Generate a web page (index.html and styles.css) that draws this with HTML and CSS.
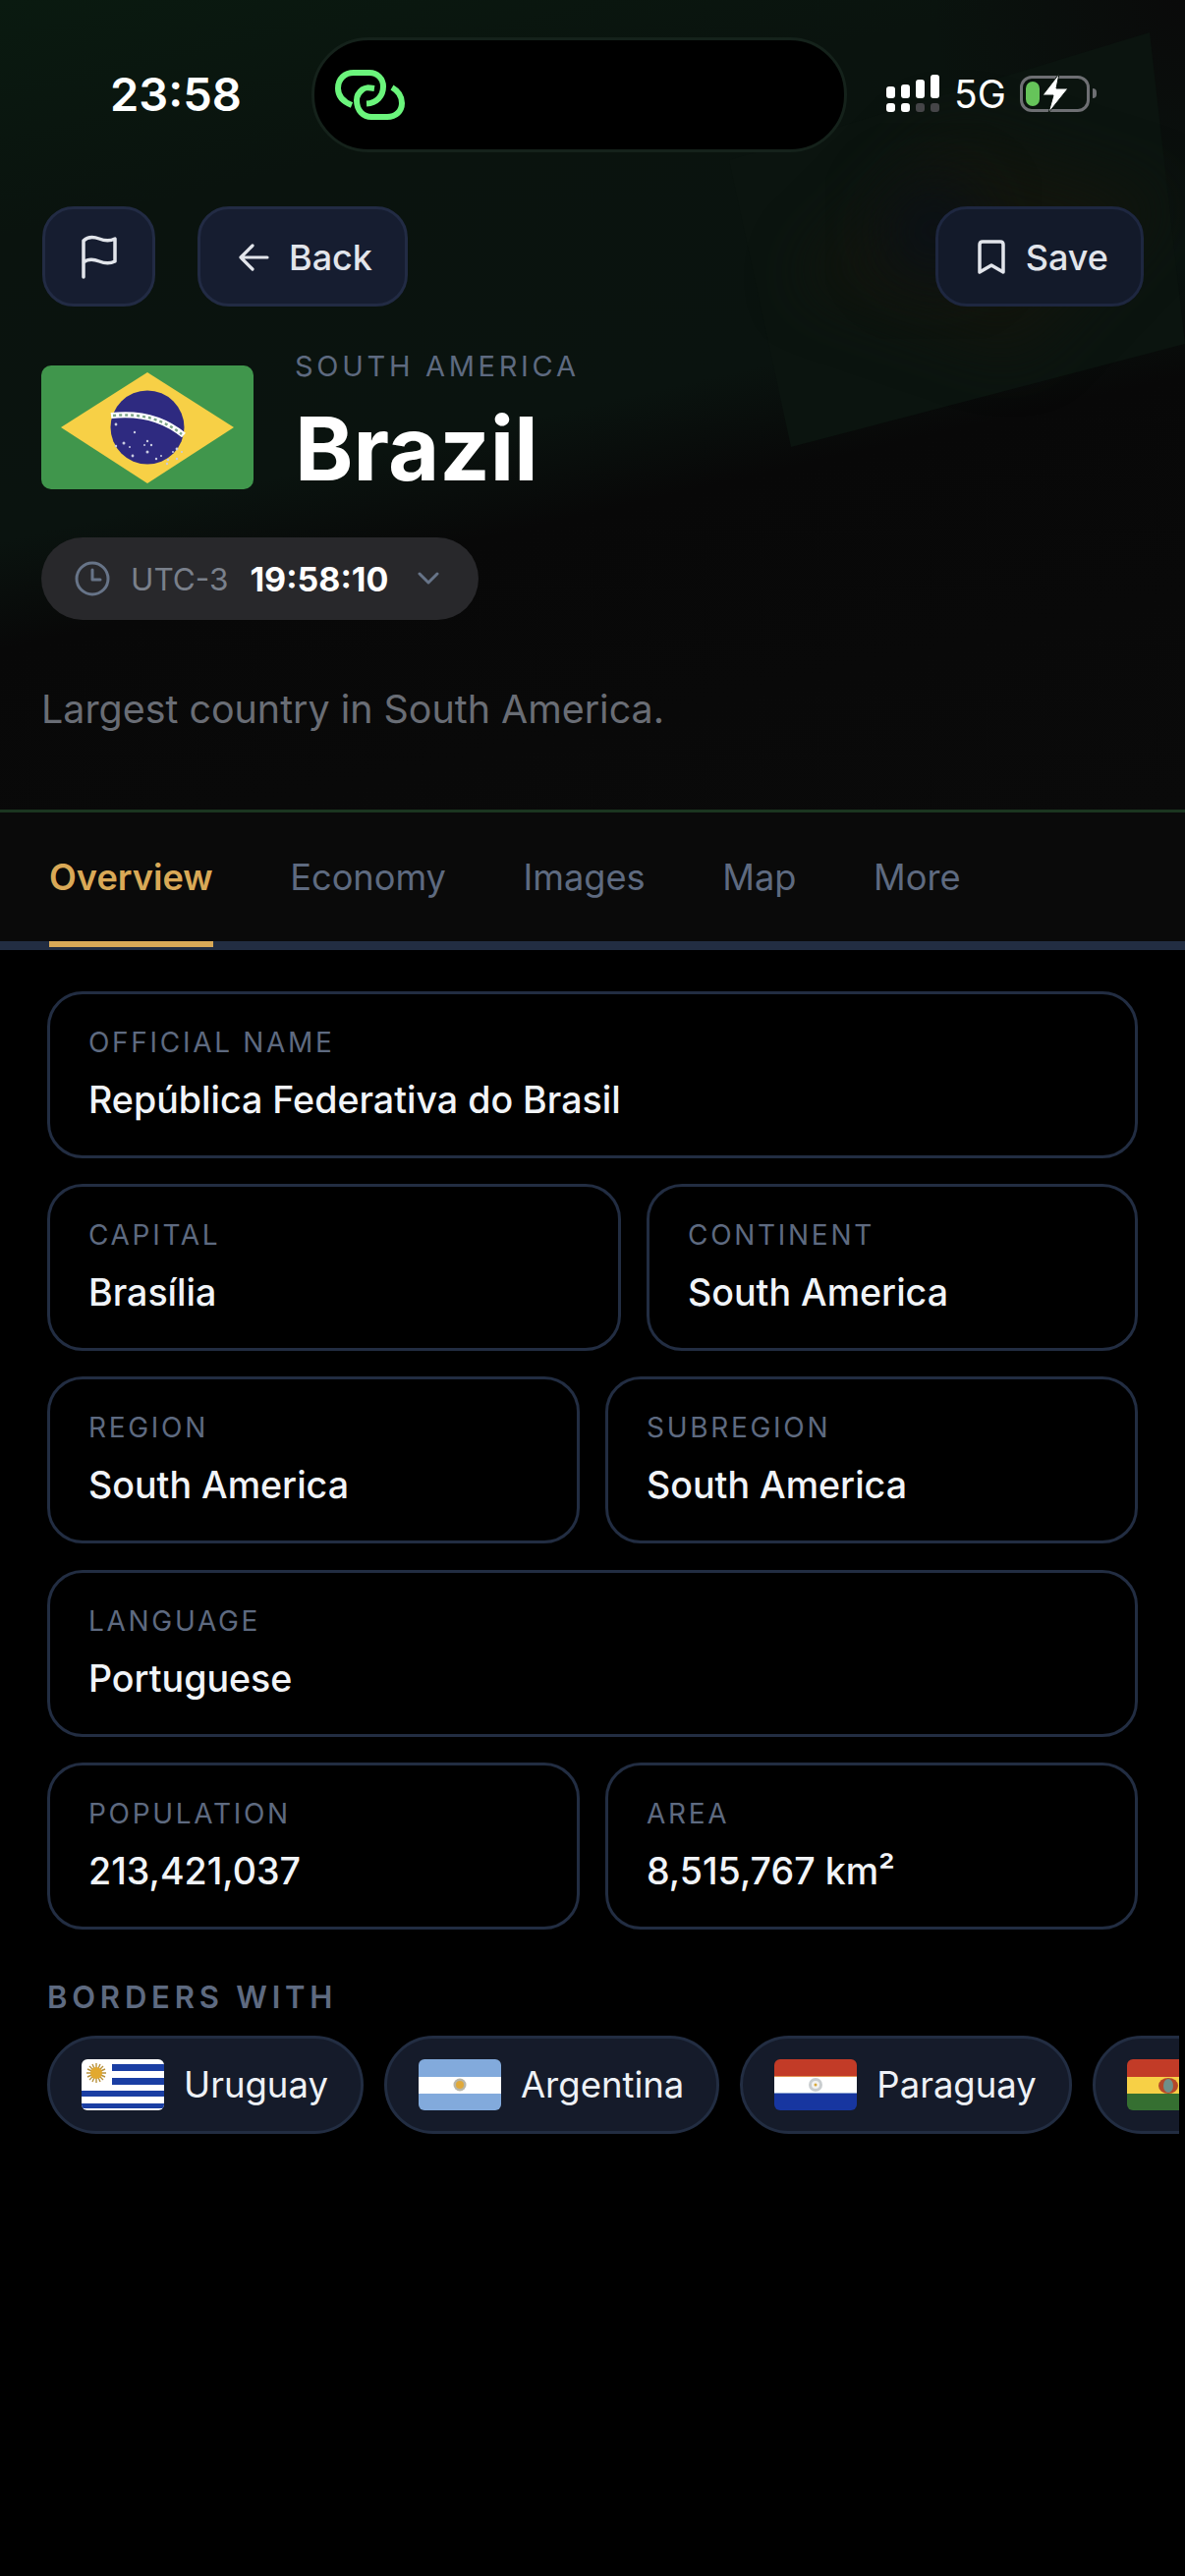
FILE: index.html
```html
<!DOCTYPE html>
<html lang="en">
<head>
  <meta charset="UTF-8">
  <meta name="viewport" content="width=device-width, initial-scale=1.0">
  <title>Brazil</title>
  <link rel="stylesheet" href="styles.css">
</head>
<body>
  <header class="hero">
    <!-- faint tilted flag behind the header -->
    <svg class="hero-bg" width="1206" height="824" viewBox="0 0 1206 824">
      <defs>
        <filter id="soft" x="-60%" y="-60%" width="220%" height="220%" color-interpolation-filters="sRGB"><feGaussianBlur stdDeviation="30"/></filter>
      </defs>
      <polygon points="742,163 1170,33 1206,350 805,455" fill="#0b140f"/>
      <polygon points="815,285 965,135 1185,205 1035,360" fill="#12150d" filter="url(#soft)"/>
      <circle cx="950" cy="235" r="50" fill="#0a1016" filter="url(#soft)"/>
    </svg>

    <div class="status-bar">
      <span class="status-time">23:58</span>
      <div class="island">
        <svg width="72" height="55" viewBox="15 8 72 55" fill="none" stroke="#6bf57c" stroke-width="6" stroke-linecap="butt">
          <path d="M32 46 C22 42 18 36 18 29 C18 19 25 13 34 13 L50 13 C58 13 64 19 64 27 C64 37 57 44 47 44.5"/>
          <path d="M55 29 C48 28 46 28 43 30 C39 33 37 37 37 41 C37 52 44 58 52 58 L68 58 C77 58 83 52 83 44 C83 37 80 32 73 28"/>
        </svg>
      </div>
      <div class="status-icons">
        <div class="signal">
          <span class="bar bar-1"></span><span class="bar bar-2"></span><span class="bar bar-3"></span><span class="bar bar-4"></span>
          <span class="dot"></span><span class="dot"></span><span class="dot dim"></span><span class="dot dim"></span>
        </div>
        <span class="network">5G</span>
        <div class="battery">
          <span class="battery-fill"></span>
          <svg class="battery-bolt" width="28" height="40" viewBox="0 0 28 40">
            <path d="M18 0 L1 22 L12 22 L7 40 L27 15 L15 15 Z" fill="#fff" stroke="#0a130e" stroke-width="1"/>
          </svg>
        </div>
        <span class="battery-tip"></span>
      </div>
    </div>

    <div class="actions">
      <button type="button" class="btn btn-flag">
        <svg width="38" height="46" viewBox="0 0 38 46" fill="none" stroke="#e2e5eb" stroke-width="3.5" stroke-linecap="round" stroke-linejoin="round">
          <path d="M3 44 V7 C8 2 14 3 19 5 C24 7 29 8 35 5 V28 C29 31 24 30 19 28 C14 26 8 25 3 29"/>
        </svg>
      </button>
      <button type="button" class="btn">
        <svg width="32" height="28" viewBox="0 0 32 28" fill="none" stroke="#e2e5eb" stroke-width="3.2" stroke-linecap="round" stroke-linejoin="round">
          <path d="M15 2 L3 14 L15 26 M3 14 H30"/>
        </svg>
        Back
      </button>
      <button type="button" class="btn btn-save">
        <svg width="30" height="36" viewBox="0 0 30 36" fill="none" stroke="#e2e5eb" stroke-width="3.5" stroke-linejoin="round">
          <path d="M3 5 C3 3 4 2 6 2 H24 C26 2 27 3 27 5 V33 L15 26 L3 33 Z"/>
        </svg>
        Save
      </button>
    </div>

    <div class="country">
      <svg class="country-flag" width="216" height="126" viewBox="0 0 216 126">
        <rect width="216" height="126" fill="#40964c"/>
        <polygon points="20,63 108,7 196,63 108,120" fill="#f7d046"/>
        <circle cx="108" cy="63" r="37.5" fill="#2e2a80"/>
        <path d="M71 51 Q115 46 145 71" fill="none" stroke="#fff" stroke-width="6"/>
        <path d="M73 51 Q115 47 143 70" fill="none" stroke="#7fa58a" stroke-width="2.5" stroke-dasharray="3 3"/>
        <g fill="#c9cbe0">
          <circle cx="76" cy="60" r="1.4"/><circle cx="95" cy="68" r="1.2"/><circle cx="84" cy="79" r="1.5"/>
          <circle cx="76" cy="82" r="1.2"/><circle cx="90" cy="83" r="1"/><circle cx="93" cy="92" r="1.4"/>
          <circle cx="108" cy="77" r="1.2"/><circle cx="105" cy="81" r="1"/><circle cx="112" cy="81" r="1.2"/>
          <circle cx="108" cy="88" r="1.5"/><circle cx="117" cy="95" r="1.2"/><circle cx="129" cy="96" r="1.2"/>
          <circle cx="134" cy="88" r="1"/><circle cx="138" cy="85" r="1.4"/><circle cx="143" cy="88" r="1"/>
          <circle cx="128" cy="100" r="1.2"/><circle cx="122" cy="92" r="1"/><circle cx="138" cy="95" r="1.2"/>
        </g>
      </svg>
      <div class="country-text">
        <div class="country-region">SOUTH AMERICA</div>
        <h1 class="country-name">Brazil</h1>
      </div>
    </div>

    <div class="time-pill">
      <svg width="36" height="36" viewBox="0 0 36 36" fill="none" stroke="#677488" stroke-width="3" stroke-linecap="round" stroke-linejoin="round">
        <circle cx="18" cy="18" r="16"/>
        <path d="M18 9 V19 H26"/>
      </svg>
      <span class="time-zone">UTC-3</span>
      <span class="time-now">19:58:10</span>
      <svg class="time-chevron" width="22" height="14" viewBox="0 0 22 14" fill="none" stroke="#677488" stroke-width="3" stroke-linecap="round" stroke-linejoin="round">
        <path d="M2 2 L11 11 L20 2"/>
      </svg>
    </div>

    <p class="summary">Largest country in South America.</p>
  </header>

  <nav class="tabs">
    <a class="tab active">Overview</a>
    <a class="tab">Economy</a>
    <a class="tab">Images</a>
    <a class="tab">Map</a>
    <a class="tab">More</a>
  </nav>

  <main class="content">
    <div class="facts">
      <div class="fact-row">
        <div class="fact">
          <div class="fact-label">OFFICIAL NAME</div>
          <div class="fact-value">República Federativa do Brasil</div>
        </div>
      </div>
      <div class="fact-row row-capital">
        <div class="fact">
          <div class="fact-label">CAPITAL</div>
          <div class="fact-value">Brasília</div>
        </div>
        <div class="fact">
          <div class="fact-label">CONTINENT</div>
          <div class="fact-value">South America</div>
        </div>
      </div>
      <div class="fact-row row-even">
        <div class="fact">
          <div class="fact-label">REGION</div>
          <div class="fact-value">South America</div>
        </div>
        <div class="fact">
          <div class="fact-label">SUBREGION</div>
          <div class="fact-value">South America</div>
        </div>
      </div>
      <div class="fact-row">
        <div class="fact">
          <div class="fact-label">LANGUAGE</div>
          <div class="fact-value">Portuguese</div>
        </div>
      </div>
      <div class="fact-row row-even">
        <div class="fact">
          <div class="fact-label">POPULATION</div>
          <div class="fact-value">213,421,037</div>
        </div>
        <div class="fact">
          <div class="fact-label">AREA</div>
          <div class="fact-value">8,515,767 km²</div>
        </div>
      </div>
    </div>

    <h2 class="borders-title">BORDERS WITH</h2>
    <div class="borders">
      <div class="chip">
        <svg class="chip-flag" width="84" height="52" viewBox="0 0 84 52">
          <rect width="84" height="52" fill="#fff"/>
          <g fill="#1a3ea3">
            <rect x="31" y="5" width="53" height="7"/>
            <rect x="31" y="19" width="53" height="7"/>
            <rect y="32" width="84" height="6"/>
            <rect y="45" width="84" height="5"/>
          </g>
          <g stroke="#b8923c" stroke-width="1.4">
            <path d="M15 4 V24 M5 14 H25 M8 7 L22 21 M22 7 L8 21 M11 5 L19 23 M19 5 L11 23 M6 10 L24 18 M24 10 L6 18"/>
          </g>
          <circle cx="15" cy="14" r="6" fill="#e2a92f"/>
        </svg>
        <span>Uruguay</span>
      </div>
      <div class="chip">
        <svg class="chip-flag" width="84" height="52" viewBox="0 0 84 52">
          <rect width="84" height="52" fill="#82aadc"/>
          <rect y="18" width="84" height="17" fill="#fff"/>
          <circle cx="42" cy="26" r="6.5" fill="#b9b6a8"/>
          <circle cx="42" cy="26" r="4" fill="#e0a93a"/>
        </svg>
        <span>Argentina</span>
      </div>
      <div class="chip">
        <svg class="chip-flag" width="84" height="52" viewBox="0 0 84 52">
          <rect width="84" height="18" fill="#c23b27"/>
          <rect y="17" width="84" height="1" fill="#e2904f"/>
          <rect y="18" width="84" height="17" fill="#fff"/>
          <rect y="34" width="84" height="18" fill="#1736a0"/>
          <rect y="34" width="84" height="1" fill="#8aa3d2"/>
          <circle cx="42" cy="26" r="7" fill="#c9cdcf"/>
          <circle cx="42" cy="26" r="4" fill="#f2f2f2"/>
          <circle cx="42" cy="26" r="1.5" fill="#d9a93c"/>
        </svg>
        <span>Paraguay</span>
      </div>
      <div class="chip">
        <svg class="chip-flag" width="84" height="52" viewBox="0 0 84 52">
          <rect width="84" height="18" fill="#c23b27"/>
          <rect y="18" width="84" height="17" fill="#f7d046"/>
          <rect y="35" width="84" height="17" fill="#356f31"/>
          <ellipse cx="42" cy="27" rx="10" ry="8" fill="#b5482a"/>
          <ellipse cx="42" cy="27" rx="5" ry="7" fill="#6f8f8a"/>
        </svg>
      </div>
    </div>
  </main>
</body>
</html>
```

FILE: styles.css
```css
* {
  box-sizing: border-box;
}
html {
  font-family: 'Inter', 'Noto Sans', sans-serif;
}
body {
  margin: 0;
  background: #000;
  min-height: 2622px;
  overflow: hidden;
}

/* Header */
.hero {
  position: relative;
  height: 827px;
  padding: 38px 42px 0 43px;
  overflow: hidden;
  background:
    radial-gradient(circle at 1206px 0, #0a0a0a 0, rgba(10, 10, 10, 0) 260px),
    linear-gradient(167deg, #0a1a10 0%, #0a130e 22%, #0a130f 50%, #080808 60%, #0a0a0a 100%);
  border-bottom: 3px solid #1b3520;
}
.hero-bg {
  position: absolute;
  top: 0;
  left: 0;
}
.status-bar,
.actions,
.country,
.time-pill,
.summary {
  position: relative;
}

/* Status bar */
.status-bar {
  display: flex;
  align-items: center;
  height: 117px;
}
.status-time {
  margin: 0 0 2px 69px;
  width: 205px;
  font-size: 47px;
  font-weight: 600;
  color: #fff;
}
.island {
  width: 545px;
  height: 117px;
  padding-left: 21px;
  display: flex;
  align-items: center;
  background: #000;
  border: 3px solid #15221b;
  border-radius: 58px;
}
.status-icons {
  display: flex;
  align-items: center;
  margin-left: 40px;
  margin-bottom: 3px;
}
.signal {
  display: grid;
  grid-template-columns: repeat(4, 9px);
  grid-template-rows: 24px 9px;
  column-gap: 6px;
  row-gap: 5px;
  align-items: end;
}
.bar,
.dot {
  background: #fff;
  border-radius: 3px;
}
.bar-1 { height: 12px; }
.bar-2 { height: 14px; }
.bar-3 { height: 19px; }
.bar-4 { height: 24px; }
.dot { height: 9px; }
.dim { background: #454548; }
.network {
  margin-left: 15px;
  font-size: 39px;
  color: #fff;
}
.battery {
  position: relative;
  margin-left: 14px;
  width: 71px;
  height: 37px;
  border: 3px solid #6e6f73;
  border-radius: 12px;
}
.battery-fill {
  position: absolute;
  top: 3px;
  left: 3px;
  width: 14px;
  height: 25px;
  background: #66c45a;
  border-radius: 7px;
}
.battery-bolt {
  position: absolute;
  top: -5px;
  left: 19px;
}
.battery-tip {
  width: 4px;
  height: 10px;
  margin-left: 3px;
  background: #6e6f73;
  border-radius: 0 4px 4px 0;
}

/* Back / save buttons */
.actions {
  display: flex;
  gap: 43px;
  margin-top: 55px;
}
.btn {
  display: flex;
  align-items: center;
  gap: 20px;
  height: 102px;
  padding: 2px 33px 0 38px;
  font: inherit;
  font-size: 36px;
  font-weight: 500;
  color: #e2e5eb;
  background: #161d30;
  border: 3px solid #222b44;
  border-radius: 32px;
}
.btn-flag {
  width: 115px;
  padding: 0;
  justify-content: center;
}
.btn-save {
  margin-left: auto;
  padding: 2px 33px 0 39px;
  background: #131a2a;
  border-color: #1e2740;
}

/* Country title */
.country {
  display: flex;
  align-items: flex-start;
  margin-top: 44px;
  margin-left: -1px;
}
.country-flag {
  margin-top: 16px;
  border-radius: 10px;
}
.country-text {
  margin-left: 42px;
}
.country-region {
  font-size: 29px;
  line-height: 34px;
  letter-spacing: 3.7px;
  color: #5e6a80;
}
.country-name {
  margin: 17px 0 0;
  font-size: 90px;
  line-height: 100px;
  font-weight: 700;
  color: #fff;
}
.time-pill {
  display: flex;
  align-items: center;
  width: 445px;
  height: 84px;
  margin: 40px 0 0 -1px;
  padding-left: 34px;
  background: #28282b;
  border-radius: 42px;
}
.time-zone {
  margin-left: 21px;
  font-size: 31.5px;
  color: #7a808b;
}
.time-now {
  margin-left: 22px;
  font-size: 34px;
  font-weight: 700;
  color: #fff;
}
.time-chevron {
  margin-left: 30px;
}
.summary {
  margin: 69px 0 0 -1px;
  font-size: 39.4px;
  line-height: 44px;
  color: #696d75;
}

/* Tabs */
.tabs {
  display: flex;
  gap: 78.6px;
  height: 140px;
  padding: 0 0 0 50px;
  background: #0a0a0a;
  border-bottom: 9px solid #222d42;
}
.tab {
  position: relative;
  height: 131px;
  line-height: 133px;
  font-size: 36.2px;
  color: #5e6a80;
}
.tab.active {
  color: #d9a957;
  font-weight: 600;
}
.tab.active::after {
  content: "";
  position: absolute;
  left: 0;
  right: 0;
  bottom: -6px;
  height: 6px;
  background: #d9a957;
}

/* Facts */
.content {
  padding: 42px 48px 0;
}
.facts {
  display: flex;
  flex-direction: column;
  gap: 26.2px;
}
.fact-row {
  display: grid;
  grid-template-columns: 1fr;
  column-gap: 26px;
}
.row-capital {
  grid-template-columns: 584px 1fr;
}
.row-even {
  grid-template-columns: 1fr 1fr;
}
.fact {
  height: 170px;
  padding: 31px 39px 0;
  border: 3px solid #222d42;
  border-radius: 36px;
}
.fact-label {
  font-size: 28px;
  line-height: 36px;
  letter-spacing: 2.7px;
  color: #5e6a80;
}
.fact-value {
  margin-top: 18px;
  font-size: 37.6px;
  line-height: 46px;
  font-weight: 500;
  color: #f1f4f8;
}

/* Borders */
.borders-title {
  margin: 49px 0 0;
  font-size: 31px;
  line-height: 40px;
  font-weight: 600;
  letter-spacing: 4.8px;
  color: #5e6a80;
}
.borders {
  display: flex;
  gap: 21px;
  width: 1152px;
  margin-top: 19px;
  overflow: hidden;
}
.chip {
  display: flex;
  flex: none;
  align-items: center;
  gap: 20px;
  height: 100px;
  padding: 0 33px 0 32px;
  font-size: 36.5px;
  color: #eef1f6;
  background: #151b2a;
  border: 3px solid #222d42;
  border-radius: 50px;
}
.chip-flag {
  border-radius: 6px;
}
```
